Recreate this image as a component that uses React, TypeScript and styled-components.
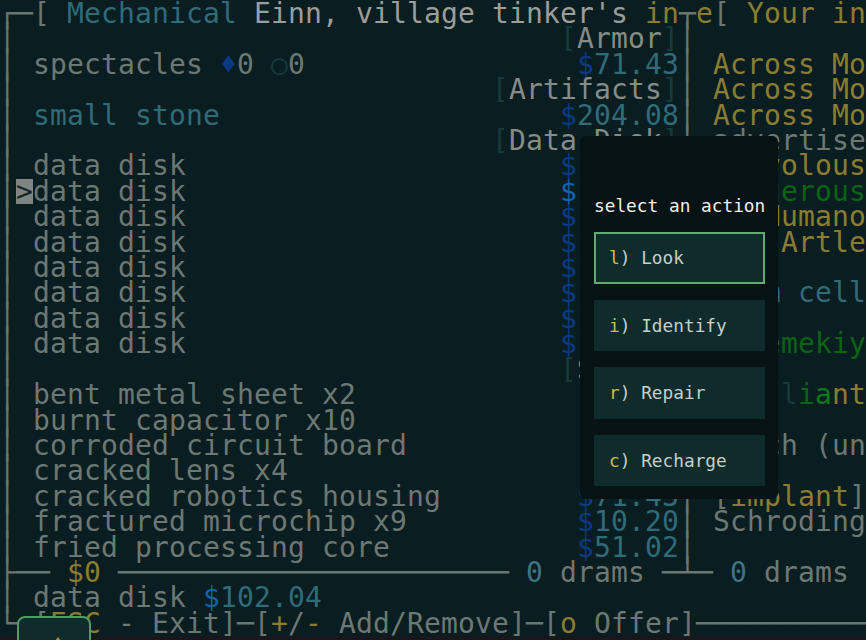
import React from 'react';
import styled, { createGlobalStyle } from 'styled-components';

const ROW_H = 25.42;
const ROWS = 25;

const C = {
  line: '#6a7672',
  gray: '#6c7874',
  light: '#9c9e9c',
  cat: '#858c89',
  dark: '#163b3b',
  cyan: '#2f6b78',
  blue: '#0c3a82',
  bblue: '#1162b0',
  yellow: '#8a7d33',
  green: '#0b6415',
  green2: '#0d7a1a',
  num: '#3e7383',
  cursor: '#132628',
};

type ColorKey = keyof typeof C;
type Seg = [string, ColorKey | null];

const GlobalStyle = createGlobalStyle`
  html, body {
    margin: 0;
    padding: 0;
    background: #16181e;
    overflow: hidden;
  }
  #root {
    width: 866px;
    height: 640px;
  }
`;

const Page = styled.div`
  position: relative;
  width: 866px;
  height: 640px;
  overflow: hidden;
  background: #16181e;
`;

const Screen = styled.div`
  position: relative;
  width: 866px;
  height: ${ROW_H * ROWS}px;
  overflow: hidden;
  background: #0a1d20;
`;

const Grid = styled.div`
  margin-left: -1px;
  padding-top: 1px;
  font-family: 'DejaVu Sans Mono', monospace;
  font-size: 28px;
  letter-spacing: 0.14px;
  color: ${C.gray};
`;

const Line = styled.div`
  height: ${ROW_H}px;
  line-height: ${ROW_H}px;
  white-space: pre;
`;

const Cell = styled.span<{ $c: string }>`
  color: ${(p) => p.$c};
`;

const Cursor = styled.span`
  display: inline-block;
  vertical-align: top;
  width: 17px;
  height: ${ROW_H}px;
  background: #7f8583;
  color: ${C.cursor};
`;

const Popup = styled.div`
  position: absolute;
  left: 580px;
  top: 136px;
  width: 198px;
  box-sizing: border-box;
  padding: 58px 13px 13px 14px;
  background: #061213;
  border-radius: 6px;
  display: flex;
  flex-direction: column;
  gap: 14px;
  font-family: 'DejaVu Sans Mono', monospace;
  font-size: 17.8px;
`;

const PopupTitle = styled.div`
  height: 24px;
  line-height: 24px;
  color: #eef1ef;
  white-space: nowrap;
`;

const Options = styled.div`
  display: flex;
  flex-direction: column;
  gap: 16px;
`;

const Option = styled.div<{ $active: boolean }>`
  height: 51.5px;
  box-sizing: border-box;
  display: flex;
  align-items: center;
  padding-left: 13px;
  background: #0f2b2c;
  border: 2px solid ${(p) => (p.$active ? '#5fab72' : 'transparent')};
  color: #c5cfcb;
  white-space: pre;
`;

const Hotkey = styled.span`
  color: #cdbb45;
`;

const CornerButton = styled.div`
  position: absolute;
  left: 17px;
  top: 616px;
  width: 74px;
  height: 44px;
  box-sizing: border-box;
  border: 2px solid #4f9d60;
  border-radius: 8px;
  background: #0f2b2c;
  display: flex;
  justify-content: center;
  padding-top: 19px;
  padding-left: 8px;
`;

const sp = (n: number): Seg => [' '.repeat(Math.max(0, n)), null];
const V: Seg = ['│', 'line'];
const len = (s: Seg[]) => s.reduce((a, x) => a + x[0].length, 0);

function body(left: Seg[], right: Seg[] = []): Seg[] {
  const pad = 39 - len(left);
  return [V, ...left, sp(pad), V, ...(right.length ? [sp(1), ...right] : [])];
}

function cat(name: string): Seg[] {
  return [sp(39 - name.length - 2), ['[', 'dark'], [name, 'cat'], [']', 'dark']];
}

function price(v: string, bright = false): Seg[] {
  return [['$', bright ? 'bblue' : 'blue'], [v, 'cyan']];
}

function item(name: Seg[], pr: Seg[], cursor = false): Seg[] {
  return [cursor ? ['>', 'cursor'] : sp(1), ...name, sp(38 - len(name) - len(pr)), ...pr];
}

const g = (t: string): Seg[] => [[t, 'gray']];

const rows: Seg[][] = [
  [
    ['┌─', 'line'], ['[', 'line'], [' ', null], ['Mechanical', 'cyan'],
    [" Einn, village tinker's ", 'light'], ['in', 'yellow'], ['┬', 'line'],
    ['e', 'yellow'], ['[', 'line'], [' ', null], ['Your in', 'yellow'],
  ],
  body(cat('Armor')),
  body(
    item(
      [['spectacles', 'gray'], [' ', null], ['♦', 'blue'], ['0', 'gray'], [' ', null], ['○', 'dark'], ['0', 'gray']],
      price('71.43')
    ),
    [['Across Mo', 'yellow']]
  ),
  body(cat('Artifacts'), [['Across Mo', 'yellow']]),
  body(item([['small stone', 'cyan']], price('204.08')), [['Across Mo', 'yellow']]),
  body(cat('Data Disk'), [['advertise', 'gray']]),
  body(item(g('data disk'), price('102.04')), [['Frivolous', 'yellow']]),
  body(item(g('data disk'), price('102.04', true), true), [['Dangerous', 'green']]),
  body(item(g('data disk'), price('102.04')), [['On Humano', 'yellow']]),
  body(item(g('data disk'), price('132.65')), [['The Artle', 'yellow']]),
  body(item(g('data disk'), price('102.04'))),
  body(item(g('data disk'), price('112.24')), [['chem cell', 'cyan']]),
  body(item(g('data disk'), price('102.04'))),
  body(item(g('data disk'), price('122.44')), [['Iphemekiy', 'green']]),
  body(cat('Scrap')),
  body(item(g('bent metal sheet x2'), price('5.10')), [
    ['Bril', 'dark'], ['l', 'dark'], ['i', 'green'], ['a', 'green2'], ['nt', 'yellow'],
  ]),
  body(item(g('burnt capacitor x10'), price('2.04'))),
  body(item(g('corroded circuit board'), price('8.16')), [['Torch (un', 'gray']]),
  body(item(g('cracked lens x4'), price('3.06'))),
  body(item(g('cracked robotics housing'), price('71.43')), [['[', 'line'], ['implant', 'yellow'], [']', 'line']]),
  body(item(g('fractured microchip x9'), price('10.20')), [['Schroding', 'gray']]),
  body(item(g('fried processing core'), price('51.02'))),
  [
    ['├──', 'line'], [' ', null], ['$0', 'yellow'], [' ', null], ['─'.repeat(23), 'line'],
    [' ', null], ['0', 'num'], [' drams ', 'gray'], ['─┴─', 'line'], [' ', null],
    ['0', 'num'], [' drams ', 'gray'],
  ],
  [V, sp(1), ['data disk', 'gray'], sp(1), ['$', 'bblue'], ['102.04', 'cyan']],
  [
    ['└─', 'line'], ['[', 'line'], ['ESC', 'yellow'], [' - Exit', 'gray'], [']', 'line'],
    ['─', 'line'], ['[', 'line'], ['+', 'yellow'], ['/', 'gray'], ['-', 'yellow'],
    [' Add/Remove', 'gray'], [']', 'line'], ['─', 'line'], ['[', 'line'], ['o', 'yellow'],
    [' Offer', 'gray'], [']', 'line'], ['─'.repeat(10), 'line'],
  ],
];

const actions: { key: string; label: string }[] = [
  { key: 'l', label: 'Look' },
  { key: 'i', label: 'Identify' },
  { key: 'r', label: 'Repair' },
  { key: 'c', label: 'Recharge' },
];

function Row({ segs }: { segs: Seg[] }) {
  return (
    <Line>
      {segs.map(([t, c], i) =>
        c === 'cursor' ? (
          <Cursor key={i}>{t}</Cursor>
        ) : (
          <Cell key={i} $c={c ? C[c] : 'inherit'}>
            {t}
          </Cell>
        )
      )}
    </Line>
  );
}

export default function App() {
  return (
    <Page>
      <GlobalStyle />
      <Screen>
        <Grid>
          {rows.map((r, i) => (
            <Row key={i} segs={r} />
          ))}
        </Grid>
        <Popup>
          <PopupTitle>select an action</PopupTitle>
          <Options>
            {actions.map((a, i) => (
              <Option key={a.key} $active={i === 0}>
                <Hotkey>{a.key}</Hotkey>
                {') ' + a.label}
              </Option>
            ))}
          </Options>
        </Popup>
      </Screen>
      <CornerButton>
        <svg width="6" height="4" viewBox="0 0 6 4">
          <path d="M3 0 L6 4 L0 4 Z" fill="#b58c2e" />
        </svg>
      </CornerButton>
    </Page>
  );
}
